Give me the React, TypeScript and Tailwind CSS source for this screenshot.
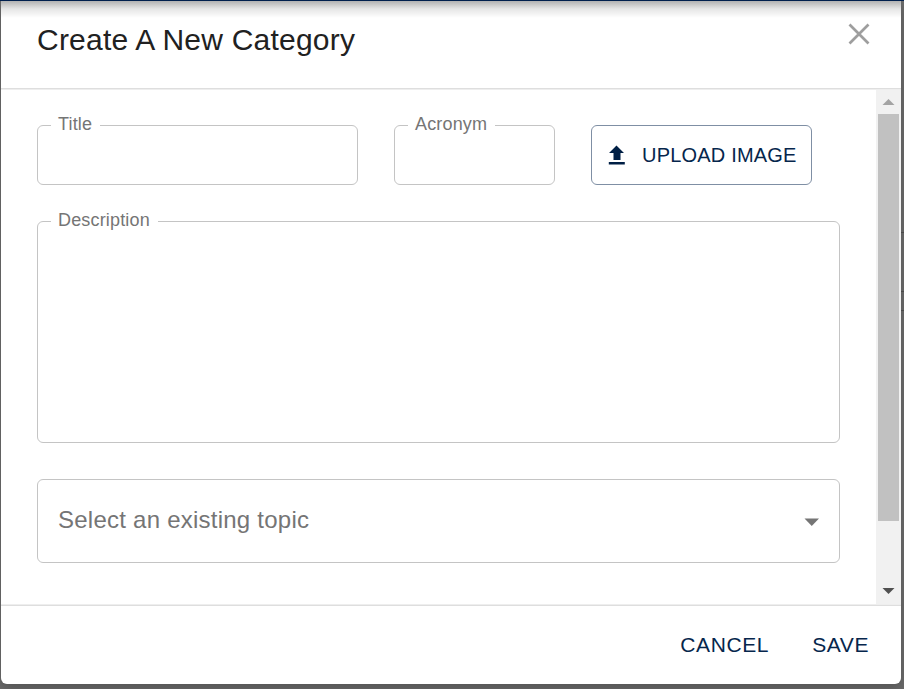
import type { ReactNode } from 'react';

type FieldProps = { label: string; className: string; notch: string };

function OutlinedField({ label, className, notch }: FieldProps) {
  return (
    <div className={`relative shrink-0 rounded-[6px] border border-[#c4c4c4] ${className}`}>
      <label
        className={`absolute -top-3 left-[13px] h-5 bg-white pl-[7px] text-[18px] leading-5 tracking-[0.17px] whitespace-nowrap text-[#757575] ${notch}`}
      >
        {label}
      </label>
    </div>
  );
}

function TextButton({ children }: { children: ReactNode }) {
  return (
    <button className="text-[21px] leading-9 tracking-[0.6px] whitespace-nowrap text-[#06264c]">{children}</button>
  );
}

function Scrollbar() {
  return (
    <div className="flex w-[25px] shrink-0 flex-col items-center bg-[#f1f1f1] pr-px pl-px">
      <div className="flex h-6 items-start justify-center pt-[9px]">
        <svg width="13" height="6" viewBox="0 0 13 6">
          <path d="M.5 6 6.5 0l6 6z" fill="#a3a3a3" />
        </svg>
      </div>
      <div className="h-[407px] w-[21px] bg-[#c1c1c1]" />
      <div className="flex grow items-end pb-[10px]">
        <svg width="13" height="6" viewBox="0 0 13 6">
          <path d="M.5 0h12l-6 6z" fill="#505050" />
        </svg>
      </div>
    </div>
  );
}

export default function App() {
  return (
    <div className="relative h-[689px] w-[904px] overflow-hidden bg-[#6b6b6b] pl-px font-['Liberation_Sans',Arial,sans-serif]">
      <div className="absolute top-[232px] right-0 h-px w-[3px] bg-[#505050]" />
      <div className="absolute top-[291px] right-0 h-px w-[3px] bg-[#505050]" />
      <div className="absolute top-[310px] right-0 h-px w-[3px] bg-[#505050]" />
      <div className="relative flex h-[684px] w-[900px] flex-col overflow-hidden rounded-b-[6px] bg-white shadow-[0_6px_12px_rgba(0,0,0,0.2)]">
        <header className="flex h-[90px] shrink-0 justify-between border-b border-[#eeeeee] pr-[31px] pl-9 shadow-[inset_0_-1px_0_#dedede]">
          <h1 className="pt-4 text-[30px] leading-[48px] tracking-[0.225px] text-[#212121]">
            Create A New Category
          </h1>
          <button aria-label="Close" className="mt-[23px] h-[22px] w-[22px]">
            <svg width="22" height="22" viewBox="0 0 22 22">
              <path d="M1.5 1.5l19 19M20.5 1.5l-19 19" stroke="#9e9e9e" strokeWidth="2.7" fill="none" />
            </svg>
          </button>
        </header>

        <main className="flex h-[514px] shrink-0">
          <div className="flex grow flex-col gap-9 pt-[35px] pl-9">
            <div className="flex gap-9">
              <OutlinedField label="Title" className="h-[60px] w-[321px]" notch="w-[49px]" />
              <OutlinedField label="Acronym" className="h-[60px] w-[161px]" notch="w-[87px]" />
              <button className="flex h-[60px] w-[221px] items-center rounded-[6px] border border-[#7f8fa4] pl-4 text-[#06264c]">
                <svg width="18" height="20" viewBox="0 0 18 20" fill="#001f45">
                  <path d="M1 8 8.500 .5 16 8h-3.500v7h-7V8z M.8 17h16v2.500h-16z" />
                </svg>
                <span className="ml-4 text-[20px] leading-9 tracking-[0.2px] whitespace-nowrap">UPLOAD IMAGE</span>
              </button>
            </div>
            <OutlinedField label="Description" className="h-[222px] w-[803px]" notch="w-[107px]" />
            <div className="flex h-[84px] w-[803px] shrink-0 items-center justify-between rounded-[6px] border border-[#c4c4c4] pr-5 pl-5">
              <span className="pb-0.5 text-[24px] leading-9 tracking-[0.24px] text-[#757575]">
                Select an existing topic
              </span>
              <svg width="15" height="8" viewBox="0 0 15 8" className="mt-px">
                <path d="M.5 0.5H15L7.75 8z" fill="#757575" />
              </svg>
            </div>
          </div>
          <Scrollbar />
        </main>

        <footer className="flex grow items-center justify-end gap-[43px] border-t border-[#eeeeee] pr-8 shadow-[inset_0_1px_0_#dedede]">
          <TextButton>CANCEL</TextButton>
          <TextButton>SAVE</TextButton>
        </footer>
        <div className="pointer-events-none absolute inset-x-0 top-0 h-[18px] bg-linear-to-b from-black/33 via-black/10 to-transparent" />
      </div>
      <div className="absolute inset-x-0 top-0 h-px bg-[#001f4d]" />
    </div>
  );
}
